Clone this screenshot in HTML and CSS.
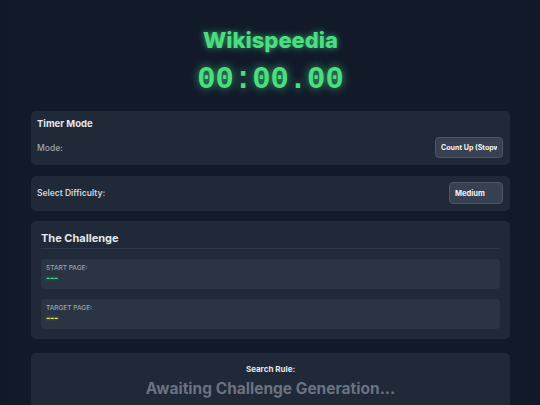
FILE: index.html
```html
<!DOCTYPE html>
<html lang="en">
<head>
    <meta charset="UTF-8">
    <meta name="viewport" content="width=device-width, initial-scale=1.0">
    <title>Wikispeedia</title>
    <link rel="stylesheet" href="styles.css">
</head>
<body>
    <div class="app">
        <h1 class="title">Wikispeedia</h1>
        <div class="timer" id="timer">00:00.00</div>

        <!-- Режим таймера -->
        <div class="card">
            <div class="card-title">Timer Mode</div>
            <div class="row">
                <label class="muted" for="mode">Mode:</label>
                <select class="pick pick-mode" id="mode">
                    <option>Count Up (Stopwatch)</option>
                    <option>Count Down</option>
                </select>
            </div>
        </div>

        <div class="card card-slim">
            <div class="row">
                <label class="light" for="difficulty">Select Difficulty:</label>
                <select class="pick pick-diff" id="difficulty">
                    <option>Easy</option>
                    <option selected>Medium</option>
                    <option>Hard</option>
                </select>
            </div>
        </div>

        <div class="card card-challenge">
            <h2 class="challenge-title">The Challenge</h2>
            <div class="page-box">
                <div class="page-label">Start Page:</div>
                <div class="page-value start">---</div>
            </div>
            <div class="page-box">
                <div class="page-label">Target Page:</div>
                <div class="page-value target">---</div>
            </div>
        </div>

        <div class="card card-rule">
            <div class="rule-label">Search Rule:</div>
            <div class="rule-text">Awaiting Challenge Generation...</div>
        </div>
    </div>
</body>
</html>
```

FILE: styles.css
```css
html, body {
    margin: 0;
    background-color: #111827;
    height: 100%;
    overflow: hidden;
}

body {
    font-family: Inter, "Noto Sans", sans-serif;
    color: #e5e7eb;
}

.app {
    margin: 0 13px 0 8px;
    min-height: 100%;
    background-color: #121a2a;
    padding: 27px 17px 0 23px;
}

.title {
    margin: 0;
    text-align: center;
    font-size: 22px;
    line-height: 26px;
    font-weight: 800;
    color: #4ade80;
    text-shadow: 0 0 6px rgba(74, 222, 128, 0.7);
}

.timer {
    margin-top: 10px;
    text-align: center;
    font-family: "Liberation Mono", "DejaVu Sans Mono", monospace;
    font-weight: bold;
    font-size: 30.5px;
    line-height: 34px;
    color: #4ade80;
    text-shadow: 0 0 8px rgba(74, 222, 128, 0.75);
}

/* карточки */
.card {
    background-color: #1f2937;
    border-radius: 5px;
    padding: 7px 7px 7px 6px;
    margin-top: 14px;
}

.card-title {
    font-size: 9.5px;
    line-height: 12px;
    font-weight: 700;
    color: #e5e7eb;
    margin-bottom: 7px;
}

.row {
    display: flex;
    justify-content: space-between;
    align-items: center;
}

.muted {
    font-size: 8.5px;
    color: #9ca3af;
    font-weight: 500;
}

.light {
    font-size: 8.5px;
    color: #d1d5db;
    font-weight: 600;
}

.pick {
    appearance: none;
    -webkit-appearance: none;
    background-color: #374151;
    border: 1px solid #4b5563;
    border-radius: 4px;
    color: #f3f4f6;
    font-family: Inter, sans-serif;
    font-size: 7.5px;
    font-weight: 700;
    height: 22px;
    padding: 0 5px;
    margin: 0;
}

.pick-mode {
    width: 68px;
    height: 21px;
    font-size: 7.1px;
}

.pick-diff {
    width: 54px;
}

.card-slim {
    margin-top: 11px;
    padding-top: 6px;
}

.card-challenge {
    margin-top: 10px;
    padding: 10px;
}

.challenge-title {
    margin: 0;
    font-size: 11px;
    line-height: 14px;
    font-weight: 700;
    color: #e5e7eb;
    padding-bottom: 3px;
    border-bottom: 1px solid #2d3748;
}

.page-box {
    background-color: #2a3442;
    border-radius: 4px;
    margin-top: 10px;
    padding: 4px 5px 6px;
}

.page-label {
    font-size: 6.5px;
    line-height: 10px;
    text-transform: uppercase;
    color: #9ca3af;
    font-weight: 500;
}

.page-value {
    font-size: 9px;
    line-height: 10px;
    font-weight: 800;
    letter-spacing: -0.2px;
}

.start {
    color: #4ade80;
    text-shadow: 0 0 3px rgba(74, 222, 128, 0.6);
}

.target {
    color: #e3e35a;
    text-shadow: 0 0 3px rgba(227, 227, 90, 0.6);
}

.card-rule {
    margin-top: 14px;
    padding: 10px 7px 10px;
    text-align: center;
}

.rule-label {
    font-size: 8px;
    line-height: 12px;
    font-weight: 700;
    color: #e5e7eb;
}

.rule-text {
    margin-top: 4px;
    font-size: 15.5px;
    line-height: 20px;
    font-weight: 700;
    color: #6b7280;
}
```
